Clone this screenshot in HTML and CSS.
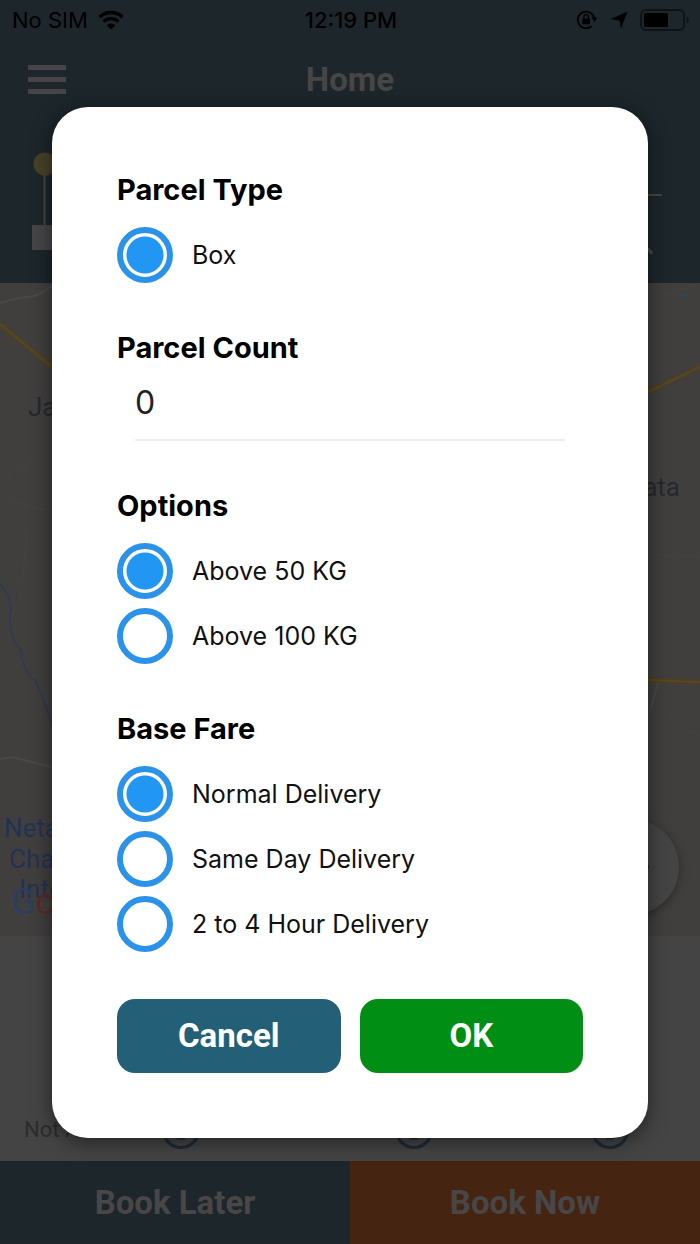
FILE: index.html
```html
<!DOCTYPE html>
<html lang="en">
<head>
<meta charset="utf-8">
<meta name="viewport" content="width=device-width, initial-scale=1">
<title>Home</title>
<link rel="stylesheet" href="styles.css">
</head>
<body>
<div class="app">
  <header class="header">
    <div class="status">
      <div class="status-side">
        <span>No SIM</span>
        <svg class="wifi" viewBox="0 0 26 20" aria-hidden="true">
          <path d="M1.5 7.2A16.5 16.5 0 0 1 24.500 7.200" fill="none" stroke="#000" stroke-width="3.400"/>
          <path d="M5.500 11.600A11 11 0 0 1 20.500 11.600" fill="none" stroke="#000" stroke-width="3.200"/>
          <path d="M13 19.500L8.600 15.200A6.400 6.400 0 0 1 17.400 15.200Z"/>
        </svg>
      </div>
      <span class="status-time">12:19 PM</span>
      <div class="status-side status-right">
        <svg class="lock" viewBox="0 0 22 20" aria-hidden="true">
          <path d="M18.200 8A8.300 8.300 0 1 0 15.500 16.200" fill="none" stroke="#000" stroke-width="1.800"/>
          <path d="M15.500 7.500H21.500L18.500 12Z"/>
          <rect x="6.300" y="8.500" width="7.600" height="5.800" rx="1"/>
          <path d="M7.800 9V7A2.300 2.300 0 0 1 12.400 7V9" fill="none" stroke="#000" stroke-width="1.300"/>
        </svg>
        <svg class="arrow" viewBox="0 0 18 18" aria-hidden="true"><path d="M17.500 .5L11 17.500L9.500 9.500L.5 8.200Z"/></svg>
        <svg class="battery" viewBox="0 0 50 22" aria-hidden="true">
          <rect x="1" y="1" width="43" height="20" rx="5" fill="none" stroke="#0d1417" stroke-width="1.800"/>
          <rect x="4" y="4" width="24" height="14" rx="1.500"/>
          <path d="M46.500 7.500Q49 8.500 49 11T46.500 14.500Z" fill="#0d1417"/>
        </svg>
      </div>
    </div>
    <div class="nav">
      <button class="menu" type="button" aria-label="Menu"><i></i><i></i><i></i></button>
      <h1 class="title">Home</h1>
      <span></span>
    </div>
    <div class="route">
      <svg class="route-pins" viewBox="0 0 26 98" aria-hidden="true">
        <path d="M13.500 22V74" stroke="#47463b" stroke-width="2"/>
        <circle cx="14" cy="12" r="11.500" fill="#454128"/>
        <rect x="1" y="73" width="25" height="25" fill="#464446"/>
      </svg>
      <div class="route-field">
        <div class="route-line"></div>
        <svg class="route-mark" viewBox="0 0 20 20" aria-hidden="true"><path d="M10 2Q17 2 18.500 8" fill="none" stroke="#464a4c" stroke-width="3"/></svg>
      </div>
    </div>
  </header>

  <main class="map">
    <svg class="map-art" viewBox="0 0 700 653" preserveAspectRatio="xMidYMid slice" aria-hidden="true">
      <g fill="none">
        <path d="M0 20Q15 15 28 14T52 2M0 476L12 474L52 484M658 400L650 428" stroke="#4a4948" stroke-width="2"/>
        <path d="M650 22Q665 8 700 2M0 196L34 178M0 208Q24 226 52 227M20 320Q24 275 28 250M648 271L700 274M670 430Q685 450 700 452" stroke="#454342" stroke-width="1"/>
        <path d="M0 41L52 84M648 109L700 84M648 397L700 399" stroke="#4b4026" stroke-width="5"/>
        <path d="M0 41L52 84M648 109L700 84M648 397L700 399" stroke="#574722" stroke-width="2"/>
        <path d="M0 300Q10 313 11 325Q8 343 15 360L21 367Q23 390 35 397Q44 416 52 443" stroke="#303b4b" stroke-width="2"/>
      </g>
      <circle cx="685" cy="13" r="3" fill="#354252"/>
      <g class="place">
        <text x="28" y="133">Jagdal</text>
        <text x="680" y="213" text-anchor="end">Kolkata</text>
      </g>
      <g class="airport">
        <text x="4" y="554">Netaji</text>
        <text x="9" y="585">Chandra</text>
        <text x="19" y="615">Inter</text>
      </g>
      <text class="brand" x="11" y="631"><tspan fill="#2b3e60">G</tspan><tspan fill="#5c2a25">o</tspan></text>
    </svg>
    <button class="locate" type="button" aria-label="My location">
      <svg viewBox="0 0 40 40" aria-hidden="true"><path d="M2 20H38M20 2V38" stroke="#20252b" stroke-width="3"/></svg>
    </button>
  </main>

  <section class="fares">
    <span class="fare-note">Not A</span>
    <svg class="info" viewBox="0 0 38 38" aria-hidden="true"><circle cx="19" cy="19" r="17.500"/><path d="M15 27H23M19 15V27"/></svg>
    <svg class="info" viewBox="0 0 38 38" aria-hidden="true"><circle cx="19" cy="19" r="17.500"/><path d="M15 27H23M19 15V27"/></svg>
    <svg class="info" viewBox="0 0 38 38" aria-hidden="true"><circle cx="19" cy="19" r="17.500"/><path d="M15 27H23M19 15V27"/></svg>
  </section>

  <footer class="booking">
    <button class="book book-later" type="button">Book Later</button>
    <button class="book book-now" type="button">Book Now</button>
  </footer>

  <div class="overlay">
    <form class="dialog" role="dialog" aria-label="Parcel details">
      <fieldset class="group">
        <legend class="group-title">Parcel Type</legend>
        <label class="option"><input type="radio" name="type" checked><span>Box</span></label>
      </fieldset>
      <div class="group count-group">
        <label class="group-title" for="count">Parcel Count</label>
        <input class="count" id="count" type="text" inputmode="numeric" value="0">
      </div>
      <fieldset class="group">
        <legend class="group-title">Options</legend>
        <label class="option"><input type="radio" name="weight" checked><span>Above 50 KG</span></label>
        <label class="option"><input type="radio" name="weight"><span>Above 100 KG</span></label>
      </fieldset>
      <fieldset class="group">
        <legend class="group-title">Base Fare</legend>
        <label class="option"><input type="radio" name="fare" checked><span>Normal Delivery</span></label>
        <label class="option"><input type="radio" name="fare"><span>Same Day Delivery</span></label>
        <label class="option"><input type="radio" name="fare"><span>2 to 4 Hour Delivery</span></label>
      </fieldset>
      <div class="actions">
        <button class="action cancel" type="button">Cancel</button>
        <button class="action ok" type="button">OK</button>
      </div>
    </form>
  </div>
</div>
</body>
</html>
```
FILE: styles.css
```css
* { box-sizing: border-box; }
body { margin: 0; font-family: Inter, sans-serif; background: #444; }
button { border: 0; font-family: Roboto, sans-serif; }

.app { position: relative; min-height: 100vh; display: flex; flex-direction: column; }

.header { background: #1c262b; padding-bottom: 33px; }
.status { display: grid; grid-template-columns: 1fr auto 1fr; align-items: center; height: 39px; padding: 0 10px 0 12px; font-size: 22px; }
.status-side { display: flex; align-items: center; gap: 10px; }
.status-right { justify-content: flex-end; gap: 12px; }
.status-time { font-weight: 500; }
.wifi { width: 26px; height: 20px; }
.lock { width: 22px; height: 20px; }
.arrow { width: 18px; height: 18px; }
.battery { width: 50px; height: 22px; }

.nav { display: grid; grid-template-columns: 1fr auto 1fr; align-items: center; height: 81px; padding: 0 28px; }
.menu { display: flex; flex-direction: column; gap: 7px; width: 38px; padding: 0; background: none; }
.menu i { height: 5px; background: #464446; }
.title { margin: 0; font: 700 33px/40px Roboto, sans-serif; color: #464646; }

.route { display: flex; align-items: flex-start; padding: 32px 38px 0 31px; }
.route-pins { width: 26px; height: 98px; }
.route-field { flex: 1; display: flex; flex-direction: column; padding-top: 42px; margin-left: 20px; }
.route-line { height: 2px; background: #444640; }
.route-mark { align-self: flex-end; width: 20px; height: 20px; margin: 50px 9px -16px 0; }

.map { position: relative; flex: 1; min-height: 653px; background: #413f3e; }
.map-art { position: absolute; inset: 0; width: 100%; height: 100%; }
.place { font: 26px Roboto, sans-serif; fill: #25282d; }
.airport { font: 26px Roboto, sans-serif; fill: #223255; }
.brand { font: 400 36px Roboto, sans-serif; }
.locate { position: absolute; right: 21px; bottom: 21px; width: 96px; height: 96px; padding: 28px; border-radius: 50%; background: #444; box-shadow: 0 2px 10px rgba(0, 0, 0, .35); }

.fares { display: grid; grid-template-columns: 138fr 233fr 196fr 38px; align-items: end; height: 225px; padding: 0 71px 12px 24px; background: #444; }
.fare-note { font: 22px/38px Roboto, sans-serif; color: #2c2c2c; }
.info { width: 38px; height: 38px; fill: none; stroke: #1d2b36; stroke-width: 3px; }

.booking { display: grid; grid-template-columns: 1fr 1fr; height: 83px; }
.book { font-size: 33px; font-weight: 700; color: #484646; }
.book-later { background: #1c262b; }
.book-now { background: #452412; }

.overlay { position: absolute; inset: 0; display: grid; grid-template-columns: minmax(0, 1fr); align-items: center; padding: 0 52px; }
.dialog { display: flex; flex-direction: column; gap: 47px; padding: 65px; border-radius: 36px; background: #fff; box-shadow: 0 4px 20px rgba(0, 0, 0, .5); }
.group { display: flex; flex-direction: column; gap: 9px; min-width: 0; margin: 0; padding: 0; border: 0; }
.group-title { padding: 0; margin-bottom: 19px; font-size: 29px; line-height: 36px; font-weight: 700; color: #000; }
.count-group { gap: 0; }
.option { display: flex; align-items: center; gap: 19px; font-size: 25px; color: #111; }
.option input { appearance: none; flex: none; width: 56px; height: 56px; margin: 0; border: 6px solid #2b92e9; border-radius: 50%; background: #fff; }
.option input:checked { background: radial-gradient(circle, #2196f3 18px, #fff 19px); }
.count { min-width: 0; height: 56px; margin: 0 18px; padding: 0 0 18px; border: 0; border-bottom: 2px solid #eee; outline: 0; font: 400 32px Inter, sans-serif; color: #222; background: none; }
.actions { display: grid; grid-template-columns: 1fr 1fr; gap: 19px; }
.action { height: 74px; border-radius: 18px; font-size: 33px; font-weight: 700; color: #fff; }
.cancel { background: #236078; }
.ok { background: #008e15; }
```
